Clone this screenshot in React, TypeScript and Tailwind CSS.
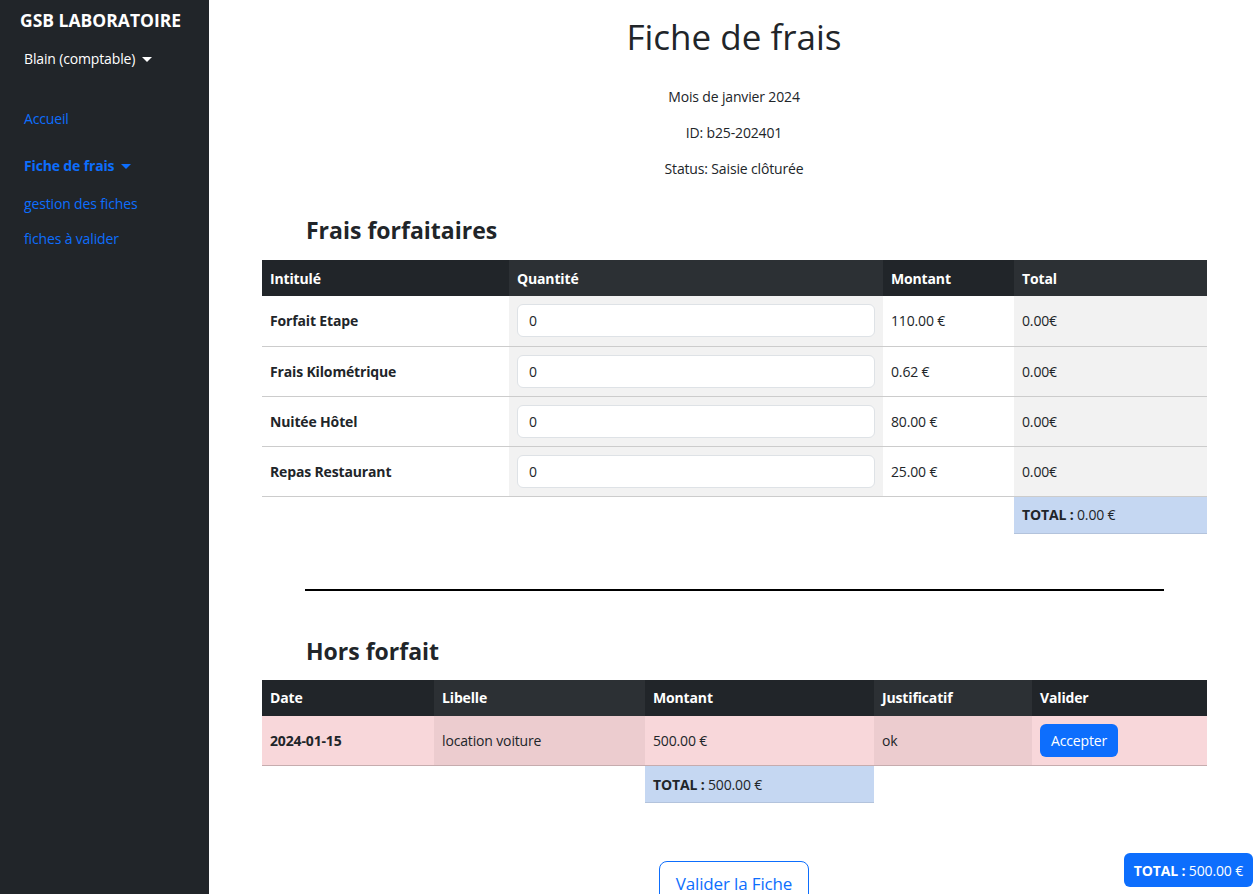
import React from "react";

const font = { fontFamily: '"Open Sans", "Noto Sans", sans-serif' };

function Caret({ color = "white" }: { color?: string }) {
  return (
    <svg width="10" height="6" viewBox="0 0 10 6" className="inline-block ml-[7px] align-middle">
      <path d="M0 0 L10 0 L5 5 Z" fill={color} />
    </svg>
  );
}

const forfaits = [
  { label: "Forfait Etape", montant: "110.00 €" },
  { label: "Frais Kilométrique", montant: "0.62 €" },
  { label: "Nuitée Hôtel", montant: "80.00 €" },
  { label: "Repas Restaurant", montant: "25.00 €" },
];

export default function App() {
  return (
    <div className="flex min-h-screen text-[14px] text-[#212529] bg-white tracking-[-0.15px]" style={font}>
      <aside className="w-[209px] shrink-0 bg-[#212529] min-h-[894px] flex flex-col">
        <div className="pl-[20px] pt-[8px] text-white font-bold text-[17.5px] leading-[24px] tracking-normal">GSB LABORATOIRE</div>
        <div className="pl-[24px] mt-[16px] text-white text-[14px] leading-[21px]">
          Blain (comptable)
          <Caret />
        </div>
        <div className="pl-[24px] mt-[39px] text-[#0d6efd] leading-[21px]">Accueil</div>
        <div className="pl-[24px] mt-[26px] text-[#0d6efd] font-bold leading-[21px]">
          Fiche de frais
          <Caret color="#0d6efd" />
        </div>
        <div className="pl-[24px] mt-[17px] text-[#0d6efd] leading-[21px]">gestion des fiches</div>
        <div className="pl-[24px] mt-[14px] text-[#0d6efd] leading-[21px]">fiches à valider</div>
      </aside>

      <main className="flex-1 flex flex-col pt-[13px]">
        <h1 className="text-center text-[35px] leading-[48px] font-medium tracking-normal">Fiche de frais</h1>
        <div className="flex flex-col items-center mt-[25px] gap-[15px] leading-[21px]">
          <p>Mois de janvier 2024</p>
          <p>ID: b25-202401</p>
          <p>Status: Saisie clôturée</p>
        </div>

        <h2 className="ml-[97px] mt-[36px] text-[23px] leading-[31px] font-bold tracking-normal">Frais forfaitaires</h2>
        <table className="ml-[53px] mt-[14px] w-[945px] border-collapse table-fixed">
          <colgroup>
            <col className="w-[247px]" />
            <col className="w-[374px]" />
            <col className="w-[131px]" />
            <col className="w-[193px]" />
          </colgroup>
          <thead>
            <tr className="h-[36px] text-white font-bold text-left">
              <th className="bg-[#212529] px-2">Intitulé</th>
              <th className="bg-[#2c3034] px-2">Quantité</th>
              <th className="bg-[#212529] px-2">Montant</th>
              <th className="bg-[#2c3034] px-2">Total</th>
            </tr>
          </thead>
          <tbody>
            {forfaits.map((f) => (
              <tr key={f.label} className="h-[50px] border-b border-[#cccccc]">
                <td className="px-2 font-bold">{f.label}</td>
                <td className="px-2 bg-[#f2f2f2]">
                  <div className="h-[33px] bg-white border border-[#dee2e6] rounded-[6px] pl-[11px] flex items-center">0</div>
                </td>
                <td className="px-2">{f.montant}</td>
                <td className="px-2 bg-[#f2f2f2]">0.00€</td>
              </tr>
            ))}
            <tr className="h-[37px]">
              <td></td>
              <td></td>
              <td></td>
              <td className="px-2 bg-[#c5d7f2] border-b border-[#b3c3dc]">
                <span className="font-bold">TOTAL :</span> 0.00 €
              </td>
            </tr>
          </tbody>
        </table>

        <div className="ml-[96px] mt-[55px] w-[859px] h-[2px] bg-black" />

        <h2 className="ml-[97px] mt-[45px] text-[23px] leading-[31px] font-bold tracking-normal">Hors forfait</h2>
        <table className="ml-[53px] mt-[13px] w-[945px] border-collapse table-fixed">
          <colgroup>
            <col className="w-[172px]" />
            <col className="w-[211px]" />
            <col className="w-[229px]" />
            <col className="w-[158px]" />
            <col className="w-[175px]" />
          </colgroup>
          <thead>
            <tr className="h-[36px] text-white font-bold text-left">
              <th className="bg-[#212529] px-2">Date</th>
              <th className="bg-[#2c3034] px-2">Libelle</th>
              <th className="bg-[#212529] px-2">Montant</th>
              <th className="bg-[#2c3034] px-2">Justificatif</th>
              <th className="bg-[#212529] px-2">Valider</th>
            </tr>
          </thead>
          <tbody>
            <tr className="h-[50px] border-b border-[#c6acae]">
              <td className="px-2 font-bold bg-[#f8d7da]">2024-01-15</td>
              <td className="px-2 bg-[#eccccf]">location voiture</td>
              <td className="px-2 bg-[#f8d7da]">500.00 €</td>
              <td className="px-2 bg-[#eccccf]">ok</td>
              <td className="px-2 bg-[#f8d7da]">
                <button className="h-[33px] px-[11px] bg-[#0d6efd] text-white rounded-[6px]">Accepter</button>
              </td>
            </tr>
            <tr className="h-[37px]">
              <td></td>
              <td></td>
              <td className="px-2 bg-[#c5d7f2] border-b border-[#b3c3dc]">
                <span className="font-bold">TOTAL :</span> 500.00 €
              </td>
              <td></td>
              <td></td>
            </tr>
          </tbody>
        </table>

        <div className="flex justify-center mt-[58px] pb-[20px]">
          <button className="h-[47px] px-[16px] border border-[#0d6efd] text-[#0d6efd] rounded-[8px] text-[17px] leading-[24px] pb-[1px]">
            Valider la Fiche
          </button>
        </div>
      </main>

      <div className="fixed right-[6px] bottom-[7px] h-[34px] px-[10px] flex items-center bg-[#0d6efd] text-white rounded-[6px] tracking-[-0.15px]">
        <span className="font-bold">TOTAL :</span>&nbsp;500.00 €
      </div>
    </div>
  );
}
